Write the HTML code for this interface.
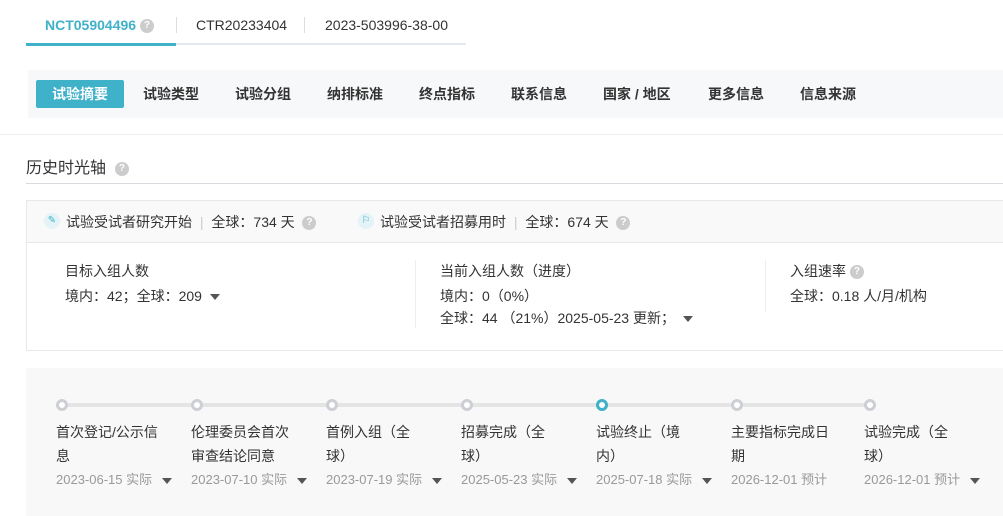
<!DOCTYPE html>
<html><head><meta charset="utf-8"><style>
*{margin:0;padding:0;box-sizing:border-box}
body{width:1003px;height:516px;background:#fff;position:relative;overflow:hidden;font-family:"Liberation Sans","Noto Sans CJK SC",sans-serif;color:#333;font-size:14px}
.a{position:absolute;white-space:nowrap}
.q{display:inline-block;width:14px;height:14px;border-radius:50%;background:#ccc;color:#fff;font-size:10px;line-height:14px;text-align:center;font-weight:bold;vertical-align:middle}
.tri{display:inline-block;width:0;height:0;border-left:5px solid transparent;border-right:5px solid transparent;border-top:6px solid #555;vertical-align:middle}
.nav{position:absolute;top:80px;font-size:14px;font-weight:bold;color:#333;line-height:28px}
.dot{position:absolute;top:399px;width:12px;height:12px;border-radius:50%;border:3px solid #ccd0d5;background:#fff}
.lbl{position:absolute;top:420px;width:106px;font-size:14px;line-height:24px;color:#333;white-space:normal}
.dt{position:absolute;top:469px;font-size:13px;color:#999;white-space:nowrap}
.dt .tri{margin-left:10px}
</style></head><body>
<div class="a" style="left:45px;top:17px;font-size:14px;color:#3fb1c9;font-weight:bold">NCT05904496 <span class="q">?</span></div>
<div class="a" style="left:176px;top:17px;width:1px;height:16px;background:#ddd"></div>
<div class="a" style="left:196px;top:17px;color:#333">CTR20233404</div>
<div class="a" style="left:304px;top:17px;width:1px;height:16px;background:#ddd"></div>
<div class="a" style="left:325px;top:17px;color:#333">2023-503996-38-00</div>
<div class="a" style="left:26px;top:43px;width:440px;height:2px;background:#e6e9ee"></div>
<div class="a" style="left:26px;top:43px;width:150px;height:3px;background:#3fb1c9"></div>
<div class="a" style="left:28px;top:70px;width:975px;height:48px;background:#f7f8fa"></div>
<div class="a" style="left:36px;top:80px;width:88px;height:28px;background:#3fb1c9;border-radius:2px"></div>
<div class="nav" style="left:52px;color:#fff">试验摘要</div>
<div class="nav" style="left:143px">试验类型</div>
<div class="nav" style="left:235px">试验分组</div>
<div class="nav" style="left:327px">纳排标准</div>
<div class="nav" style="left:419px">终点指标</div>
<div class="nav" style="left:511px">联系信息</div>
<div class="nav" style="left:603px">国家 / 地区</div>
<div class="nav" style="left:708px">更多信息</div>
<div class="nav" style="left:800px">信息来源</div>
<div class="a" style="left:0;top:134px;width:1003px;height:1px;background:#eceef1"></div>
<div class="a" style="left:26px;top:154px;font-size:16px">历史时光轴 &nbsp;<span class="q">?</span></div>
<div class="a" style="left:26px;top:183px;width:977px;height:1px;background:#d8dbe0"></div>
<div class="a" style="left:26px;top:200px;width:980px;height:151px;border:1px solid #e8e8e8"></div>
<div class="a" style="left:27px;top:201px;width:976px;height:42px;background:#f9f9f9;border-bottom:1px solid #e8e8e8"></div>
<div class="a" style="left:44px;top:213px;width:16px;height:16px;border-radius:50%;background:#e3f3f7;color:#3fb1c9;font-size:10px;text-align:center;line-height:16px">✎</div>
<div class="a" style="left:66px;top:212px;font-size:14px">试验受试者研究开始 <span style="color:#ccc;margin:0 4px">|</span> 全球：734 天 &nbsp;<span class="q">?</span></div>
<div class="a" style="left:358px;top:213px;width:16px;height:16px;border-radius:50%;background:#e3f3f7;color:#3fb1c9;font-size:10px;text-align:center;line-height:16px">⚐</div>
<div class="a" style="left:380px;top:212px;font-size:14px">试验受试者招募用时 <span style="color:#ccc;margin:0 4px">|</span> 全球：674 天 &nbsp;<span class="q">?</span></div>
<div class="a" style="left:65px;top:261px">目标入组人数</div>
<div class="a" style="left:65px;top:286px">境内：42；全球：209 &nbsp;<span class="tri"></span></div>
<div class="a" style="left:415px;top:260px;width:1px;height:68px;background:#eee"></div>
<div class="a" style="left:440px;top:261px">当前入组人数（进度）</div>
<div class="a" style="left:440px;top:286px">境内：0（0%）</div>
<div class="a" style="left:440px;top:308px">全球：44 （21%）2025-05-23 更新； &nbsp;<span class="tri"></span></div>
<div class="a" style="left:765px;top:260px;width:1px;height:52px;background:#eee"></div>
<div class="a" style="left:790px;top:261px">入组速率 <span class="q">?</span></div>
<div class="a" style="left:790px;top:286px">全球：0.18 人/月/机构</div>
<div class="a" style="left:26px;top:368px;width:977px;height:148px;background:#f8f8f8"></div>
<div class="a" style="left:62px;top:403px;width:808px;height:4px;background:#e4e4e4"></div>
<div class="dot" style="left:56px"></div><div class="dot" style="left:191px"></div><div class="dot" style="left:326px"></div><div class="dot" style="left:461px"></div><div class="dot" style="left:596px;border-color:#3fb1c9"></div><div class="dot" style="left:731px"></div><div class="dot" style="left:864px"></div>
<div class="lbl" style="left:56px">首次登记/公示信息</div>
<div class="lbl" style="left:191px">伦理委员会首次审查结论同意</div>
<div class="lbl" style="left:326px;width:92px">首例入组（全球）</div>
<div class="lbl" style="left:461px;width:92px">招募完成（全球）</div>
<div class="lbl" style="left:596px;width:92px">试验终止（境内）</div>
<div class="lbl" style="left:731px;width:106px">主要指标完成日期</div>
<div class="lbl" style="left:864px;width:92px">试验完成（全球）</div>
<div class="dt" style="left:56px">2023-06-15 实际<span class="tri"></span></div>
<div class="dt" style="left:191px">2023-07-10 实际<span class="tri"></span></div>
<div class="dt" style="left:326px">2023-07-19 实际<span class="tri"></span></div>
<div class="dt" style="left:461px">2025-05-23 实际<span class="tri"></span></div>
<div class="dt" style="left:596px">2025-07-18 实际<span class="tri"></span></div>
<div class="dt" style="left:731px">2026-12-01 预计</div>
<div class="dt" style="left:864px">2026-12-01 预计<span class="tri"></span></div>
</body></html>
